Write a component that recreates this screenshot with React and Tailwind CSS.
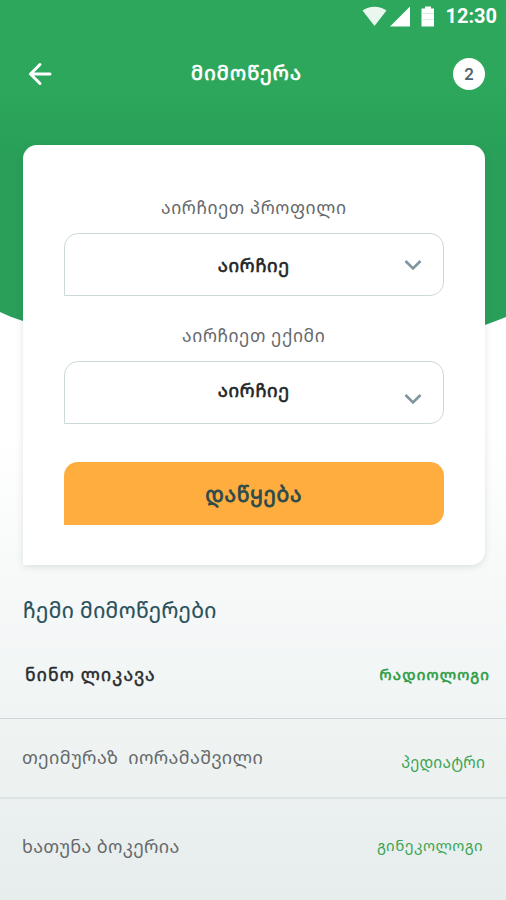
import React, { Fragment, useState } from "react";

const chats = [
  {
    name: "ნინო ლიკავა",
    role: "რადიოლოგი",
    rowClass: "h-[80px] pl-[25px] pr-4 border-b border-[#ccd6d8]",
    nameClass: "text-[17.5px] tracking-[1.2px] text-[#2a2c2e] [-webkit-text-stroke:0.5px_#2a2c2e] -mt-[9px]",
    roleClass: "text-[15px] tracking-[1.2px] text-[#2b9c45] [-webkit-text-stroke:0.6px_#2b9c45] -mt-[9px]",
  },
  {
    name: "თეიმურაზ\u00a0 იორამაშვილი",
    role: "პედიატრი",
    rowClass: "h-[80px] pl-[22px] pr-[21px] border-b-2 border-[#dce3e5]",
    nameClass: "text-[18px] tracking-[0.35px] text-[#66696b] -mt-[2px]",
    roleClass: "text-[15.5px] tracking-[0.2px] text-[#3da455] mt-[9px]",
  },
  {
    name: "ხათუნა ბოკერია",
    role: "გინეკოლოგი",
    rowClass: "h-[96px] pl-[22px] pr-[23px]",
    nameClass: "text-[18px] tracking-[0.3px] text-[#66696b] -mt-[2px]",
    roleClass: "text-[15px] tracking-[0.5px] text-[#3da455] -mt-[3px]",
  },
];

const StatusBar = () => (
  <div className="flex h-8 items-center justify-end pr-[10px] text-white">
    <svg width="26" height="21" viewBox="0 0 26 21">
      <path d="M0.5 4.5C7-0.6 18-0.6 24.5 4.5L12.5 20Z" fill="#eaf7ee" />
    </svg>
    <svg width="20" height="21" viewBox="0 0 20 21" className="ml-[2px]">
      <path d="M20 0.500V20.500H0Z" fill="#fff" />
    </svg>
    <svg width="14" height="21" viewBox="0 0 14 21" className="ml-[11px]">
      <path d="M4 0.500h6v2h3v18h-12.500v-18h3.500z" fill="#fff" />
      <path d="M0.500 7.500h12.500M0.500 13.500h12.500" stroke="#d9efe0" />
    </svg>
    <span className="-mr-px ml-[10px] font-[Roboto] text-[20px] leading-none font-bold">12:30</span>
  </div>
);

const Header = () => (
  <div className="flex h-[84px] items-center justify-between pl-7 pr-[21px]">
    <svg width="25" height="24" viewBox="0 0 25 24" fill="none" stroke="#fff" strokeWidth="3" strokeLinecap="round">
      <path d="M12 2.500L2.500 12L12 21.500M2.500 12H22" strokeLinejoin="round" />
    </svg>
    <h1 className="-mt-[2px] mr-[5px] -ml-[8px] text-[20px] tracking-[1.1px] text-white [-webkit-text-stroke:0.7px_#fff]">მიმოწერა</h1>
    <span className="flex size-8 items-center justify-center rounded-full bg-white font-[Inter] text-[16px] font-semibold text-[#52656d]">
      2
    </span>
  </div>
);

const Chevron = () => (
  <svg width="18" height="12" viewBox="0 0 18 12" fill="none" stroke="#80969e" strokeWidth="2.600">
    <path d="M1.500 2L9 9.500L16.500 2" />
  </svg>
);

const SelectField = ({ label, value, labelClass, valueClass, iconClass, open }) => (
  <div className="flex flex-col">
    <label className={`-mt-px text-center text-[17.5px] leading-6 text-[#66696b] ${labelClass}`}>{label}</label>
    <button
      onClick={open}
      className="mt-[14px] grid h-[63px] grid-cols-[1fr_auto_1fr] items-center rounded-[14px] rounded-bl-none border border-[#ccd7d9] bg-white px-[21px]"
    >
      <span />
      <span className={`text-[18.5px] tracking-[0.7px] text-[#222426] [-webkit-text-stroke:0.6px_#222426] ${valueClass}`}>{value}</span>
      <span className={`justify-self-end ${iconClass}`}>
        <Chevron />
      </span>
    </button>
  </div>
);

const App = () => {
  const [data, setData] = useState({ active: "" });

  return (
    <div className="grid h-[900px] w-[506px] overflow-hidden bg-linear-to-b from-white from-48% to-[#e6edec] [font-family:'Noto_Sans_Georgian','DejaVu_Sans',sans-serif]">
      {/* Green backdrop with the curved bottom edge */}
      <svg width="506" height="345" viewBox="0 0 506 345" className="col-start-1 row-start-1">
        <defs>
          <linearGradient id="green" x1="0" y1="0" x2="0" y2="1">
            <stop offset="0.250" stopColor="#2ca75b" />
            <stop offset="0.450" stopColor="#299f59" />
          </linearGradient>
        </defs>
        <path d="M0 0H506V317Q495 321.500 485 325Q250 390 23 321Q11 317.500 0 312Z" fill="url(#green)" />
      </svg>

      <div className="col-start-1 row-start-1 flex flex-col">
        <StatusBar />
        <Header />

        {/* New chat form */}
        <div className="ml-[23px] mr-[21.5px] mt-[29px] h-[420px] rounded-[14px] rounded-bl-none bg-white px-[41px] pt-[51px] shadow-[0_2px_7px_rgba(60,80,90,0.150)]">
          <SelectField
            label="აირჩიეთ პროფილი"
            value="აირჩიე"
            labelClass="tracking-[0.6px]"
            valueClass=""
            iconClass=""
            open={() => setData({ ...data, active: "profile" })}
          />
          <div className="h-[28px]" />
          <SelectField
            label="აირჩიეთ ექიმი"
            value="აირჩიე"
            labelClass="tracking-[0.6px]"
            valueClass="-mt-[5px]"
            iconClass="mt-[12px]"
            open={() => setData({ ...data, active: "doctor" })}
          />
          <button className="mt-[38px] h-[63px] w-full rounded-[14px] rounded-bl-none bg-[#ffad3f] pt-[3px] text-[21px] tracking-[0.7px] text-[#2c4a4b] [-webkit-text-stroke:0.8px_#2c4a4b]">
            დაწყება
          </button>
        </div>

        {/* My chats */}
        <h2 className="mt-[31px] pl-[23px] text-[21px] leading-7 tracking-[0.4px] text-[#28505a] [-webkit-text-stroke:0.2px_#28505a]">ჩემი მიმოწერები</h2>
        <div className="mt-[15px]">
          {chats.map((item) => (
            <Fragment key={item.name}>
              <div className={`flex items-center justify-between whitespace-nowrap ${item.rowClass}`}>
                <span className={item.nameClass}>{item.name}</span>
                <span className={item.roleClass}>{item.role}</span>
              </div>
            </Fragment>
          ))}
        </div>
      </div>
    </div>
  );
};

export default App;
